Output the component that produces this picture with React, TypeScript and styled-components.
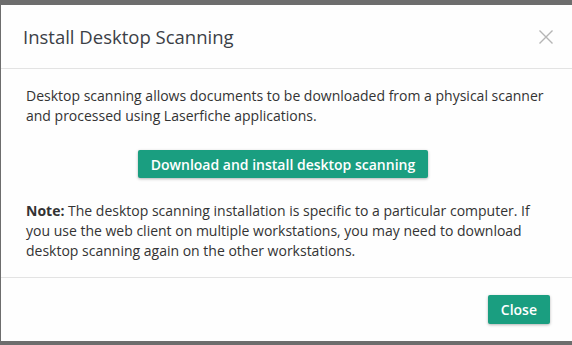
import React from "react";
import styled, { createGlobalStyle } from "styled-components";

const Global = createGlobalStyle`
  html, body { margin: 0; padding: 0; background: #6d6d6d; }
  body { font-family: "Open Sans", "Noto Sans", sans-serif; }
  * { box-sizing: border-box; }
`;

const Screen = styled.div`
  width: 572px;
  height: 345px;
  background: #6d6d6d;
  padding: 5px 0 4px 1px;
  display: flex;
  overflow: hidden;
`;

const Dialog = styled.div`
  flex: 1;
  background: #fefefe;
  display: flex;
  flex-direction: column;
`;

const Header = styled.div`
  height: 64px;
  flex: none;
  display: flex;
  align-items: center;
  justify-content: space-between;
  padding: 0 18px 0 22px;
  border-bottom: 1px solid #e3e3e3;
`;

const Title = styled.h1`
  margin: 0;
  font-size: 18.5px;
  font-weight: 400;
  color: #3b4046;
`;

const CloseX = styled.button`
  border: none;
  background: none;
  padding: 0;
  width: 16px;
  height: 16px;
  display: flex;
  cursor: pointer;
`;

const Body = styled.div`
  padding: 17px 24px 16px 25px;
  display: flex;
  flex-direction: column;
  border-bottom: 1px solid #e3e3e3;
`;

const Text = styled.p`
  margin: 0;
  font-size: 14px;
  line-height: 20px;
  color: #333;
`;

const Strong = styled.strong`
  font-weight: 700;
`;

const PrimaryButton = styled.button<{ $h?: number }>`
  font-family: "Open Sans", "Noto Sans", sans-serif;
  font-size: 14px;
  font-weight: 600;
  color: #fff;
  background: #1a9e80;
  border: none;
  border-radius: 2px;
  box-shadow: 0 1px 3px rgba(0, 0, 0, 0.3);
  height: ${(p) => p.$h ?? 28}px;
  padding: 0 13px;
  cursor: pointer;
`;

const CenterRow = styled.div`
  display: flex;
  justify-content: center;
  margin: 24px 8px 23px 0;
`;

const Footer = styled.div`
  display: flex;
  justify-content: flex-end;
  padding: 17px 22px 0;
`;

export default function App() {
  return (
    <>
      <Global />
      <Screen>
        <Dialog>
          <Header>
            <Title>Install Desktop Scanning</Title>
            <CloseX aria-label="Close">
              <svg width="16" height="16" viewBox="0 0 16 16">
                <path d="M1.5 1.5 L14.5 14.5 M14.5 1.5 L1.5 14.5" stroke="#b5b5b5" strokeWidth="1.4" />
              </svg>
            </CloseX>
          </Header>
          <Body>
            <Text>
              Desktop scanning allows documents to be downloaded from a physical scanner and processed using
              Laserfiche applications.
            </Text>
            <CenterRow>
              <PrimaryButton>Download and install desktop scanning</PrimaryButton>
            </CenterRow>
            <Text>
              <Strong>Note:</Strong> The desktop scanning installation is specific to a particular computer. If you
              use the web client on multiple workstations, you may need to download desktop scanning again on the
              other workstations.
            </Text>
          </Body>
          <Footer>
            <PrimaryButton $h={29}>Close</PrimaryButton>
          </Footer>
        </Dialog>
      </Screen>
    </>
  );
}
